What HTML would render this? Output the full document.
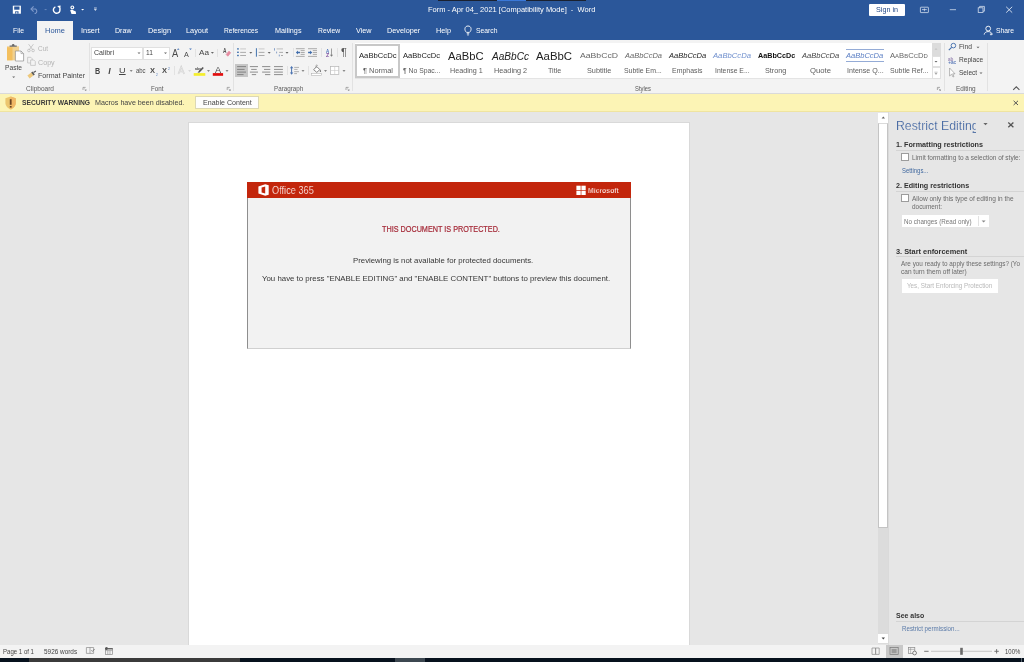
<!DOCTYPE html>
<html>
<head>
<meta charset="utf-8">
<title>Word</title>
<style>
*{box-sizing:border-box;margin:0;padding:0}
html,body{width:1024px;height:662px;overflow:hidden;background:#e6e6e6;font-family:"Liberation Sans",sans-serif}
body{filter:blur(0.4px)}
.a{position:absolute}
.t{position:absolute;white-space:nowrap;line-height:12px;transform-origin:0 50%}
svg{position:absolute;left:0;top:0}
#tx{position:absolute;left:0;top:0;width:1024px;height:662px;will-change:transform}

</style>
</head>
<body>
<!-- title bar + tab row -->
<div class="a" style="left:0;top:0;width:1024px;height:40px;background:#2b579a"></div>
<div class="a" style="left:438px;top:0;width:148px;height:1px;background:#1a2130"></div>
<div class="a" style="left:497px;top:0;width:29px;height:1px;background:#3a78d8"></div>
<div class="a" style="left:869px;top:3.5px;width:36px;height:12px;background:#fff;border-radius:1px"></div>
<div class="a" style="left:37px;top:21px;width:36px;height:19px;background:#f3f3f3"></div>
<!-- ribbon -->
<div class="a" style="left:0;top:40px;width:1024px;height:53.5px;background:#f3f3f3"></div>
<div class="a" style="left:0;top:92.5px;width:1024px;height:1px;background:#dadada"></div>
<!-- group separators -->
<div class="a" style="left:89px;top:43px;width:1px;height:48px;background:#e2e2e2"></div>
<div class="a" style="left:233px;top:43px;width:1px;height:48px;background:#e2e2e2"></div>
<div class="a" style="left:352px;top:43px;width:1px;height:48px;background:#e2e2e2"></div>
<div class="a" style="left:944px;top:43px;width:1px;height:48px;background:#e2e2e2"></div>
<div class="a" style="left:987px;top:43px;width:1px;height:48px;background:#e2e2e2"></div>
<!-- small separators -->
<div class="a" style="left:195px;top:48.5px;width:1px;height:8px;background:#e2e2e2"></div>
<div class="a" style="left:217px;top:48.5px;width:1px;height:8px;background:#e2e2e2"></div>
<div class="a" style="left:173.5px;top:66px;width:1px;height:9px;background:#e2e2e2"></div>
<div class="a" style="left:292.5px;top:48px;width:1px;height:9px;background:#e2e2e2"></div>
<div class="a" style="left:320.5px;top:48px;width:1px;height:9px;background:#e2e2e2"></div>
<div class="a" style="left:337px;top:48px;width:1px;height:9px;background:#e2e2e2"></div>
<div class="a" style="left:286.5px;top:66px;width:1px;height:9px;background:#e2e2e2"></div>
<div class="a" style="left:308px;top:66px;width:1px;height:9px;background:#e2e2e2"></div>
<!-- font boxes -->
<div class="a" style="left:91.2px;top:46.5px;width:51.8px;height:13px;background:#fff;border:1px solid #e0e0e0"></div>
<div class="a" style="left:143px;top:46.5px;width:26.5px;height:13px;background:#fff;border:1px solid #e0e0e0"></div>
<!-- align-left selected -->
<div class="a" style="left:235.3px;top:64.2px;width:12.7px;height:12.8px;background:#c6c6c6"></div>
<!-- styles gallery -->
<div class="a" style="left:355px;top:43px;width:585.5px;height:35.5px;background:#fff;border-bottom:1px solid #e4e4e4"></div>
<div class="a" style="left:355px;top:43.5px;width:44.5px;height:34.5px;background:#fff;border:2px solid #c8c8c8"></div>
<div class="a" style="left:931.5px;top:43px;width:9px;height:12.5px;background:#dcdcdc"></div>
<div class="a" style="left:931.5px;top:55.5px;width:9px;height:11.5px;background:#fff;border:1px solid #e0e0e0"></div>
<div class="a" style="left:931.5px;top:67px;width:9px;height:11.5px;background:#fff;border:1px solid #e0e0e0"></div>
<div class="a" style="left:846px;top:49.2px;width:37.5px;height:0.6px;background:#94abd6"></div>
<div class="a" style="left:846px;top:61.3px;width:37.5px;height:0.6px;background:#94abd6"></div>
<!-- security bar -->
<div class="a" style="left:0;top:93.5px;width:1024px;height:17.8px;background:#fcf4b5"></div>
<div class="a" style="left:0;top:110.6px;width:1024px;height:0.8px;background:#efe4a0"></div>
<div class="a" style="left:195.3px;top:96.1px;width:63.3px;height:12.6px;background:#fdfdfc;border:1px solid #dcd8b4"></div>
<!-- page -->
<div class="a" style="left:187.5px;top:122px;width:502.6px;height:524px;background:#fff;border:1px solid #d9d9d9"></div>
<!-- embedded picture -->
<div class="a" style="left:247px;top:181.7px;width:384px;height:167px;background:#f2f2f2;border:1px solid #8e8e8e;border-top:none;border-bottom:1.6px solid #d0d0d0"></div>
<div class="a" style="left:247px;top:181.7px;width:384px;height:16px;background:#c3260c"></div>
<!-- doc scrollbar -->
<div class="a" style="left:878.3px;top:112.5px;width:10px;height:531px;background:#dcdcdc"></div>
<div class="a" style="left:878.3px;top:112.5px;width:10px;height:10px;background:#fff"></div>
<div class="a" style="left:878.3px;top:122.5px;width:10px;height:405px;background:#fff;border:1px solid #c4c4c4;border-top-color:#dadada"></div>
<div class="a" style="left:878.3px;top:633.7px;width:10px;height:9.5px;background:#fff"></div>
<div class="a" style="left:888.3px;top:111.5px;width:1px;height:533px;background:#dadada"></div>
<!-- pane -->
<div class="a" style="left:896px;top:150px;width:128px;height:1px;background:#d4d4d4"></div>
<div class="a" style="left:896px;top:190.5px;width:128px;height:1px;background:#d4d4d4"></div>
<div class="a" style="left:896px;top:256px;width:128px;height:1px;background:#d4d4d4"></div>
<div class="a" style="left:896px;top:620.5px;width:128px;height:1px;background:#d4d4d4"></div>
<div class="a" style="left:901.2px;top:153.3px;width:8.3px;height:7.8px;background:#fff;border:1px solid #9c9c9c"></div>
<div class="a" style="left:901.2px;top:194.4px;width:8.3px;height:7.8px;background:#fff;border:1px solid #9c9c9c"></div>
<div class="a" style="left:901.7px;top:215px;width:87px;height:12.3px;background:#fff"></div>
<div class="a" style="left:978px;top:216px;width:1px;height:10.3px;background:#e2e2e2"></div>
<div class="a" style="left:901.7px;top:279px;width:96.2px;height:13.5px;background:#fff"></div>
<!-- status bar -->
<div class="a" style="left:0;top:644.5px;width:1024px;height:13.2px;background:#f3f3f3"></div>
<div class="a" style="left:885.5px;top:644.5px;width:17.3px;height:13.2px;background:#c8c8c8"></div>
<!-- taskbar sliver -->
<div class="a" style="left:0;top:657.6px;width:1024px;height:5px;background:#06111d"></div>
<div class="a" style="left:29.4px;top:657.6px;width:210.6px;height:5px;background:#3b3b3b"></div>
<div class="a" style="left:394.5px;top:657.6px;width:30px;height:5px;background:#3c4750"></div>
<div class="a" style="left:1020.5px;top:657.6px;width:1px;height:5px;background:#5a6570"></div>

<svg width="1024" height="662" viewBox="0 0 1024 662">
<defs>
<path id="dd" d="M-1.5,-0.7 L1.5,-0.7 L0,0.9 Z"/>
<g id="launch"><path d="M0,0 H2.6 M0,0 V2.6" stroke="#8a8a8a" stroke-width="0.7" fill="none"/><path d="M1.6,3.4 H3.4 V1.6 Z" fill="#8a8a8a"/><path d="M1.2,1.2 L3,3" stroke="#8a8a8a" stroke-width="0.6"/></g>
</defs>
<!-- ===== QAT ===== -->
<g fill="none" stroke="#fff" stroke-width="1">
<!-- save -->
<path d="M12.8,5.7 H20.9 V13.7 H12.8 Z" fill="#fff" stroke="none"/>
<rect x="14.2" y="6.5" width="5.3" height="3.2" fill="#2b579a" stroke="none"/>
<rect x="15.2" y="11.3" width="3.3" height="2.4" fill="#2b579a" stroke="none"/>
<rect x="16.3" y="11.9" width="1" height="1.8" fill="#fff" stroke="none"/>
<!-- undo faded -->
<path d="M31,9 H35.6 A2.6,2.6 0 0 1 35.6,13.4 H34.6" stroke="#7f9acb" stroke-width="1.1"/>
<path d="M33.6,6.4 L31,9 L33.6,11.6" stroke="#7f9acb" stroke-width="1.1"/>
<path d="M44.6,9.6 H46.6" stroke="#6f8dc2" stroke-width="0.9"/>
<!-- redo -->
<path d="M59.6,8.4 A3.3,3.3 0 1 1 55.4,6.9" stroke-width="1.4"/>
<path d="M57.2,6 L60.6,5.6 L60.4,9.2 Z" fill="#fff" stroke="none"/>
</g>
<!-- touch -->
<circle cx="72.3" cy="7.4" r="1.9" fill="#fff"/>
<path d="M70.2,10.2 L72,9.4 L73.6,10.4 L75.8,11.6 L76,14 L71.5,14 Z" fill="#fff"/>
<circle cx="72.3" cy="7.4" r="0.8" fill="#2b579a"/>
<use href="#dd" x="82.6" y="9.6" fill="#fff"/>
<path d="M94,8 H96.8" stroke="#fff" stroke-width="0.7"/>
<use href="#dd" x="95.4" y="9.9" fill="#fff"/>
<!-- window controls -->
<g fill="none" stroke="#dfe7f3" stroke-width="0.75">
<rect x="920.4" y="7.2" width="8" height="5.4" rx="0.5"/>
<path d="M922,9.6 H926.8 M924.4,8.4 V11.2" stroke-width="0.7"/>
<path d="M949.8,9.7 H956"/>
<rect x="978.2" y="7.8" width="4.8" height="4.8"/>
<path d="M979.6,7.8 V6.4 H984.4 V11.2 H983"/>
<path d="M1006.2,6.8 L1012.2,12.6 M1012.2,6.8 L1006.2,12.6" stroke-width="0.9"/>
</g>
<!-- lightbulb -->
<g fill="none" stroke="#fff" stroke-width="0.9">
<path d="M466.6,32.4 C464,30.4 464.4,26 468,26 C471.6,26 472,30.4 469.4,32.4 Z"/>
<path d="M466.8,33.8 H469.2 M467.3,35 H468.7"/>
</g>
<!-- share person -->
<g fill="none" stroke="#fff" stroke-width="0.9">
<circle cx="988.2" cy="28.6" r="2.4"/>
<path d="M984.2,34.6 C984.4,30.6 992,30.6 992.2,34.6"/>
<path d="M991,33.2 V35.4 M989.9,34.3 H992.1" stroke-width="0.7"/>
</g>

<!-- ===== CLIPBOARD ===== -->
<rect x="7" y="46.3" width="12" height="14" fill="#f1d190"/>
<rect x="7" y="47.3" width="5.5" height="13" fill="#f3bf5e"/>
<path d="M9.6,46.8 V45.4 H11.8 C11.8,43.4 14.6,43.4 14.6,45.4 H16.8 V46.8 Z" fill="#6a6a6a"/>
<path d="M15.4,51 H21 L23.6,53.6 V61 H15.4 Z" fill="#fff" stroke="#8e8e8e" stroke-width="0.7"/>
<path d="M21,51 V53.6 H23.6" fill="none" stroke="#8e8e8e" stroke-width="0.6"/>
<use href="#dd" x="13.7" y="77.1" fill="#666"/>
<!-- scissors (disabled) -->
<g fill="none" stroke="#bcbcbc" stroke-width="0.8">
<path d="M28.6,44.2 L32.8,49.8 M33.4,44.2 L29.2,49.8"/>
<circle cx="28.9" cy="50.5" r="1.3"/><circle cx="33.1" cy="50.5" r="1.3"/>
</g>
<!-- copy (disabled) -->
<g fill="#f3f3f3" stroke="#bcbcbc" stroke-width="0.7">
<path d="M27.6,57.3 H30.8 L32.2,58.7 V63 H27.6 Z"/>
<path d="M30.6,60 H33.8 L35.3,61.5 V65.4 H30.6 Z"/>
</g>
<!-- format painter -->
<path d="M27.4,75.4 L31.4,72.6 L33.4,75.6 L29.6,78.6 Z" fill="#edc87c"/>
<path d="M31.2,72.4 L32.6,71.4 L34.8,74.4 L33.4,75.6 Z" fill="#5a5a5a"/>
<path d="M33.2,72 L35.6,70.6 L36.2,71.6 L33.9,73 Z" fill="#5a5a5a"/>
<use href="#launch" x="83" y="87.4"/>
<use href="#launch" x="227.2" y="87.4"/>
<use href="#launch" x="346" y="87.4"/>
<use href="#launch" x="937.4" y="87.4"/>

<!-- ===== FONT ===== -->
<use href="#dd" x="139" y="53.2" fill="#666"/>
<use href="#dd" x="165.5" y="53.2" fill="#666"/>
<use href="#dd" x="212.4" y="52.8" fill="#666"/>
<use href="#dd" x="131.2" y="70.9" fill="#666"/>
<use href="#dd" x="189.6" y="70.9" fill="#cfcfcf"/>
<use href="#dd" x="208.5" y="70.9" fill="#666"/>
<use href="#dd" x="227" y="70.9" fill="#666"/>
<!-- grow / shrink arrows -->
<path d="M176.9,49.8 L178.2,48.3 L179.5,49.8 Z" fill="#4a76b8"/>
<path d="M189.1,48.4 L191.9,48.4 L190.5,49.9 Z" fill="#4a76b8"/>
<!-- clear formatting -->
<path d="M226.2,54.4 L229,51.2 L230.6,52.8 L227.8,56.2 Z" fill="#e58aa0" stroke="#e58aa0" stroke-width="0.8" stroke-linejoin="round"/>
<!-- text effects faded A -->
<path d="M178.4,74 L181.2,66.8 L184.2,74 M179.6,71.4 H183" fill="none" stroke="#cdcdcd" stroke-width="1.5"/>
<path d="M178.4,74 L181.2,66.8 L184.2,74 M179.6,71.4 H183" fill="none" stroke="#f3f3f3" stroke-width="0.5"/>
<!-- highlighter -->
<rect x="193.7" y="73.1" width="11.6" height="2.7" fill="#f4ee2c"/>
<path d="M197.6,72.8 L198.4,71.4 L202.6,67 L203.8,68 L199.6,72.4 Z" fill="#555"/>
<!-- font color bar -->
<rect x="212.8" y="73.1" width="10.3" height="2.7" fill="#e10e0e"/>

<!-- ===== PARAGRAPH row 1 ===== -->
<g fill="#4273ae">
<rect x="237.1" y="48.2" width="1.7" height="1.4"/><rect x="237.1" y="51.6" width="1.7" height="1.4"/><rect x="237.1" y="54.8" width="1.7" height="1.4"/>
<rect x="255.9" y="48.2" width="1" height="8.5"/>
</g>
<g stroke="#8c8c8c" stroke-width="0.7" fill="none">
<path d="M240.2,48.9 H246" stroke="#b8b8b8"/><path d="M240.2,52.4 H246 M240.2,55.5 H246"/>
<path d="M258.7,48.9 H264.5" stroke="#b8b8b8"/><path d="M258.7,52.4 H264.5 M258.7,55.5 H264.5"/>
<path d="M276.6,48.9 H283" stroke="#a8a8a8"/><path d="M279.2,52.4 H283 M281,55.5 H283"/>
</g>
<g stroke="#5a7eb6" stroke-width="0.7" fill="none"><path d="M274.5,48.2 V50.6 M276.6,51.6 V53.4 M279.3,54.6 V56.4"/></g>
<use href="#dd" x="250.8" y="52.8" fill="#666"/>
<use href="#dd" x="269.2" y="52.8" fill="#666"/>
<use href="#dd" x="287" y="52.8" fill="#666"/>
<!-- indent icons -->
<g stroke="#8c8c8c" stroke-width="0.7" fill="none">
<path d="M295.9,48.7 H304.7 M295.9,56.4 H304.7 M300.6,50.6 H304.7 M300.6,52.5 H304.7 M300.6,54.4 H304.7"/>
<path d="M308,48.7 H317 M308,56.4 H317 M312.8,50.6 H317 M312.8,52.5 H317 M312.8,54.4 H317"/>
</g>
<path d="M295.9,52.5 L298,50.4 V51.8 H300 V53.2 H298 V54.6 Z" fill="#3f6cab"/>
<path d="M312.2,52.5 L310.1,50.4 V51.8 H308.1 V53.2 H310.1 V54.6 Z" fill="#3f6cab"/>
<!-- sort arrow -->
<path d="M331.5,48.5 V56" stroke="#7a7a7a" stroke-width="0.7"/><path d="M330,54.8 L331.5,56.8 L333,54.8 Z" fill="#7a7a7a"/>
<!-- ===== PARAGRAPH row 2 ===== -->
<g stroke="#6c6c6c" stroke-width="0.75" fill="none">
<path d="M237.1,66.6 H246 M237.1,69.4 H244.6 M237.1,72.1 H246 M237.1,74.6 H243.6"/>
<path d="M249.9,66.6 H258 M251.2,69.4 H256.7 M249.9,72.1 H258 M251.8,74.6 H256.1"/>
<path d="M262.1,66.6 H270.3 M264,69.4 H270.3 M262.1,72.1 H270.3 M265,74.6 H270.3"/>
<path d="M274,66.6 H282.9 M274,69.4 H282.9 M274,72.1 H282.9 M274,74.6 H282.9"/>
<path d="M294.2,67.4 H299 M294.2,69.4 H297.6 M294.2,71.7 H299 M294.2,73.6 H297" stroke="#9a9a9a"/>
</g>
<path d="M291.6,65.9 L293.3,68.2 H292.1 V72.5 H293.3 L291.6,74.8 L289.9,72.5 H291.1 V68.2 H289.9 Z" fill="#4a72b0"/>
<use href="#dd" x="303" y="70.9" fill="#666"/>
<!-- bucket -->
<rect x="311.6" y="73.4" width="9.9" height="2.1" fill="#fff" stroke="#a8a8a8" stroke-width="0.5"/>
<path d="M313.6,69.6 L316.8,66.6 L319.8,69.6 L316.8,72.4 Z" fill="#fff" stroke="#6a6a6a" stroke-width="0.8"/>
<path d="M316,68 V65.6 C316,64.8 317.6,64.8 317.6,65.8" fill="none" stroke="#7a7a7a" stroke-width="0.6"/>
<path d="M320.2,69.4 C321.2,70.6 321.4,71.8 320.4,72 C319.6,71.8 319.6,70.6 320.2,69.4 Z" fill="#6a6a6a"/>
<use href="#dd" x="325.5" y="70.9" fill="#666"/>
<!-- borders -->
<rect x="330.6" y="66.4" width="8.2" height="8.2" fill="#fff" stroke="#b4b4b4" stroke-width="0.7"/>
<path d="M334.7,66.4 V74.6 M330.6,70.5 H338.8" stroke="#c8c8c8" stroke-width="0.6"/>
<use href="#dd" x="344" y="70.9" fill="#666"/>
<!-- gallery scroll arrows -->
<use href="#dd" x="936" y="49.4" fill="#c6c6c6" transform="rotate(180 936 49.2)"/>
<use href="#dd" x="936" y="61.6" fill="#666"/>
<path d="M934.4,72.2 H937.6" stroke="#8a8a8a" stroke-width="0.5"/>
<path d="M934.6,73.2 L937.4,73.2 L936,74.8 Z" fill="#8a8a8a"/>

<!-- ===== EDITING ===== -->
<circle cx="953.4" cy="45.6" r="2.3" fill="none" stroke="#3f6cab" stroke-width="0.9"/>
<path d="M951.6,47.4 L948.8,50.2" stroke="#3f6cab" stroke-width="1.1"/>
<use href="#dd" x="978" y="47.4" fill="#666"/>
<path d="M948.4,62.6 H950.8 M949.6,61.4 V63.8" stroke="#5a7ab8" stroke-width="0.6"/>
<use href="#dd" x="981" y="73.2" fill="#666"/>
<path d="M949.6,68 V76 L951.6,74.2 L953,77 L954,76.5 L952.7,73.8 H955 Z" fill="#fff" stroke="#8a8a8a" stroke-width="0.6"/>
<path d="M1013.2,89.8 L1016.3,86.8 L1019.4,89.8" fill="none" stroke="#555" stroke-width="1.1"/>

<!-- ===== SECURITY BAR ===== -->
<path d="M5.4,98.2 L10.6,96.4 L15.8,98.2 V103 C15.8,106.4 12.6,108.6 10.6,109.6 C8.6,108.6 5.4,106.4 5.4,103 Z" fill="#ecc66e"/>
<path d="M10.6,96.4 L15.8,98.2 V103 C15.8,106.4 12.6,108.6 10.6,109.6 Z" fill="#f0b866"/>
<rect x="9.8" y="99.2" width="1.8" height="5.6" fill="#6a4424"/><rect x="9.8" y="106" width="1.8" height="1.6" fill="#6a4424"/>
<path d="M1013.6,100.8 L1018,105 M1018,100.8 L1013.6,105" stroke="#555" stroke-width="1"/>
<!-- ===== DOC LOGOS ===== -->
<path d="M258.4,186.6 L265.2,184.3 L268.7,185.2 V194.8 L265.2,195.7 L258.4,193.6 Z M261.6,187.4 V192.6 L265.2,193.4 V186.4 Z" fill="#fff" fill-rule="evenodd"/>
<g fill="#fff"><rect x="576.4" y="185.7" width="4.3" height="4.3"/><rect x="581.4" y="185.7" width="4.3" height="4.3"/><rect x="576.4" y="190.7" width="4.3" height="4.3"/><rect x="581.4" y="190.7" width="4.3" height="4.3"/></g>
<!-- ===== PANE / SCROLL ICONS ===== -->
<path d="M881.6,118.4 L883.3,116.5 L885,118.4 Z" fill="#666"/>
<path d="M881.6,637.6 L883.3,639.5 L885,637.6 Z" fill="#444"/>
<path d="M983.4,123 L987.6,123 L985.5,125.3 Z" fill="#666"/>
<path d="M1008.3,122.6 L1013.4,127.3 M1013.4,122.6 L1008.3,127.3" stroke="#555" stroke-width="1.3"/><rect x="972.6" y="132.1" width="3.4" height="0.9" fill="#4a6aa0"/>
<path d="M981.6,220.4 L985.6,220.4 L983.6,222.6 Z" fill="#8a8a8a"/>
<!-- ===== STATUS BAR ICONS ===== -->
<g fill="none" stroke="#8a8a8a" stroke-width="0.7">
<path d="M86.4,647.5 H93.6 V653.4 H86.4 Z M90,647.5 V653.4"/>
<path d="M91.4,650.4 L92.4,651.4 L94.6,649" stroke="#666" stroke-width="0.8"/>
<rect x="105.4" y="648.6" width="7" height="5.8"/>
<path d="M105.4,650.6 H112.4 M107.8,650.6 V654.4 M110,650.6 V654.4" stroke-width="0.6"/>
</g>
<rect x="108" y="648.2" width="4.6" height="1.2" fill="#555"/>
<circle cx="106.5" cy="648.6" r="1.5" fill="#555"/>
<!-- view icons -->
<g fill="none" stroke="#8a8a8a" stroke-width="0.7">
<path d="M872,648 H875.6 V654.4 H872 Z M875.6,648 H879.2 V654.4 H875.6 Z"/>
<rect x="890" y="647.6" width="8.2" height="7" stroke="#777"/>
<rect x="891.6" y="649" width="5" height="4.2" fill="#9a9a9a" stroke="none"/>
<rect x="908.4" y="647.6" width="6.4" height="6"/>
<path d="M910.6,647.6 V653.6 M908.4,649.4 H914.8" stroke-width="0.5"/>
<circle cx="914.6" cy="653" r="1.9" fill="#f3f3f3" stroke="#555"/>
</g>
<!-- zoom slider -->
<path d="M924.2,651.3 H928.6" stroke="#666" stroke-width="0.9"/>
<path d="M931,651.3 H992" stroke="#b0b0b0" stroke-width="0.7"/>
<rect x="960.2" y="647.8" width="2.6" height="7" fill="#6a6a6a"/>
<path d="M994.4,651.3 H998.8 M996.6,649.1 V653.5" stroke="#666" stroke-width="0.9"/>
</svg>

<div id="tx">
<div class="t" style="left:427.70px;top:4.20px;font-size:7.2px;color:#fff;transform:scaleX(1.0427);">Form - Apr 04_ 2021 [Compatibility Mode]&nbsp; -&nbsp; Word</div>
<div class="t" style="left:876.00px;top:4.19px;font-size:7.3px;color:#1f4686;transform:scaleX(0.9860);">Sign in</div>
<div class="t" style="left:12.50px;top:24.59px;font-size:7.3px;color:#fff;transform:scaleX(0.9349);">File</div>
<div class="t" style="left:80.50px;top:24.59px;font-size:7.3px;color:#fff;transform:scaleX(1.0137);">Insert</div>
<div class="t" style="left:115.00px;top:24.59px;font-size:7.3px;color:#fff;transform:scaleX(0.9688);">Draw</div>
<div class="t" style="left:147.50px;top:24.59px;font-size:7.3px;color:#fff;transform:scaleX(1.0124);">Design</div>
<div class="t" style="left:186.00px;top:24.59px;font-size:7.3px;color:#fff;transform:scaleX(1.0036);">Layout</div>
<div class="t" style="left:224.00px;top:24.59px;font-size:7.3px;color:#fff;transform:scaleX(0.9108);">References</div>
<div class="t" style="left:274.50px;top:24.59px;font-size:7.3px;color:#fff;transform:scaleX(0.9901);">Mailings</div>
<div class="t" style="left:317.50px;top:24.59px;font-size:7.3px;color:#fff;transform:scaleX(0.9295);">Review</div>
<div class="t" style="left:355.50px;top:24.59px;font-size:7.3px;color:#fff;transform:scaleX(0.9880);">View</div>
<div class="t" style="left:386.75px;top:24.59px;font-size:7.3px;color:#fff;transform:scaleX(0.9995);">Developer</div>
<div class="t" style="left:436.00px;top:24.59px;font-size:7.3px;color:#fff;transform:scaleX(0.9990);">Help</div>
<div class="t" style="left:475.50px;top:24.59px;font-size:7.3px;color:#fff;transform:scaleX(0.9297);">Search</div>
<div class="t" style="left:996.00px;top:24.59px;font-size:7.3px;color:#fff;transform:scaleX(0.9238);">Share</div>
<div class="t" style="left:45.00px;top:24.59px;font-size:7.3px;color:#2b579a;transform:scaleX(1.0273);">Home</div>
<div class="t" style="left:5.00px;top:62.00px;font-size:7.2px;color:#444;transform:scaleX(0.9244);">Paste</div>
<div class="t" style="left:38.00px;top:42.80px;font-size:7.2px;color:#b4b4b4;transform:scaleX(0.8939);">Cut</div>
<div class="t" style="left:37.90px;top:56.50px;font-size:7.2px;color:#b4b4b4;transform:scaleX(0.9952);">Copy</div>
<div class="t" style="left:37.90px;top:69.70px;font-size:7.2px;color:#444;transform:scaleX(0.9906);">Format Painter</div>
<div class="t" style="left:26.00px;top:82.81px;font-size:7.0px;color:#5a5a5a;transform:scaleX(0.9343);">Clipboard</div>
<div class="t" style="left:150.50px;top:82.81px;font-size:7.0px;color:#5a5a5a;transform:scaleX(0.8919);">Font</div>
<div class="t" style="left:273.75px;top:82.81px;font-size:7.0px;color:#5a5a5a;transform:scaleX(0.8944);">Paragraph</div>
<div class="t" style="left:635.00px;top:82.81px;font-size:7.0px;color:#5a5a5a;transform:scaleX(0.8393);">Styles</div>
<div class="t" style="left:956.00px;top:82.81px;font-size:7.0px;color:#5a5a5a;transform:scaleX(0.9203);">Editing</div>
<div class="t" style="left:93.60px;top:47.30px;font-size:7.2px;color:#444;transform:scaleX(0.9816);">Calibri</div>
<div class="t" style="left:145.75px;top:47.30px;font-size:7.2px;color:#444;transform:scaleX(0.9172);">11</div>
<div class="t" style="left:94.90px;top:65.21px;font-size:8.4px;color:#444;font-weight:bold;transform:scaleX(0.8577);">B</div>
<div class="t" style="left:108.20px;top:65.20px;font-size:8.6px;color:#444;font-weight:bold;font-style:italic;transform:scaleX(1.0000);">I</div>
<div class="t" style="left:118.60px;top:65.04px;font-size:8.0px;color:#444;transform:scaleX(1.1503);text-decoration:underline;">U</div>
<div class="t" style="left:135.90px;top:65.32px;font-size:6.9px;color:#4a4a4a;transform:scaleX(0.8629);">abc</div>
<div class="t" style="left:199.25px;top:46.87px;font-size:7.6px;color:#444;transform:scaleX(1.0756);">Aa</div>
<div class="t" style="left:958.80px;top:41.10px;font-size:7.2px;color:#444;transform:scaleX(0.9296);">Find</div>
<div class="t" style="left:958.80px;top:54.20px;font-size:7.2px;color:#444;transform:scaleX(0.9175);">Replace</div>
<div class="t" style="left:958.80px;top:67.30px;font-size:7.2px;color:#444;transform:scaleX(0.9107);">Select</div>
<div class="t" style="left:21.90px;top:97.20px;font-size:7.1px;color:#3a3a3a;font-weight:bold;transform:scaleX(0.9458);">SECURITY WARNING</div>
<div class="t" style="left:94.90px;top:97.20px;font-size:7.1px;color:#444;transform:scaleX(1.0069);">Macros have been disabled.</div>
<div class="t" style="left:202.50px;top:97.20px;font-size:7.1px;color:#444;transform:scaleX(0.9968);">Enable Content</div>
<div class="t" style="left:358.75px;top:50.44px;font-size:8.0px;color:#222;transform:scaleX(0.9585);">AaBbCcDc</div>
<div class="t" style="left:362.50px;top:65.00px;font-size:7.2px;color:#5c5c5c;transform:scaleX(1.0334);">&para; Normal</div>
<div class="t" style="left:403.00px;top:50.44px;font-size:8.0px;color:#222;transform:scaleX(0.9457);">AaBbCcDc</div>
<div class="t" style="left:403.00px;top:65.00px;font-size:7.2px;color:#5c5c5c;transform:scaleX(0.9487);">&para; No Spac...</div>
<div class="t" style="left:447.90px;top:49.57px;font-size:11.8px;color:#222;transform:scaleX(0.9521);">AaBbC</div>
<div class="t" style="left:449.50px;top:65.00px;font-size:7.2px;color:#5c5c5c;transform:scaleX(0.9990);">Heading 1</div>
<div class="t" style="left:491.75px;top:49.86px;font-size:10.6px;color:#222;font-style:italic;transform:scaleX(0.9518);">AaBbCc</div>
<div class="t" style="left:493.75px;top:65.00px;font-size:7.2px;color:#5c5c5c;transform:scaleX(1.0112);">Heading 2</div>
<div class="t" style="left:535.90px;top:49.57px;font-size:11.8px;color:#222;transform:scaleX(0.9655);">AaBbC</div>
<div class="t" style="left:548.00px;top:65.00px;font-size:7.2px;color:#5c5c5c;transform:scaleX(0.9953);">Title</div>
<div class="t" style="left:580.00px;top:50.44px;font-size:8.0px;color:#666;transform:scaleX(1.0819);">AaBbCcD</div>
<div class="t" style="left:586.75px;top:65.00px;font-size:7.2px;color:#5c5c5c;transform:scaleX(1.0111);">Subtitle</div>
<div class="t" style="left:625.00px;top:50.44px;font-size:8.0px;color:#666;font-style:italic;transform:scaleX(0.9349);">AaBbCcDa</div>
<div class="t" style="left:624.25px;top:65.00px;font-size:7.2px;color:#5c5c5c;transform:scaleX(0.9641);">Subtle Em...</div>
<div class="t" style="left:669.00px;top:50.44px;font-size:8.0px;color:#222;font-style:italic;transform:scaleX(0.9412);">AaBbCcDa</div>
<div class="t" style="left:672.00px;top:65.00px;font-size:7.2px;color:#5c5c5c;transform:scaleX(0.9663);">Emphasis</div>
<div class="t" style="left:713.00px;top:50.44px;font-size:8.0px;color:#6f8fcd;font-style:italic;transform:scaleX(0.9601);">AaBbCcDa</div>
<div class="t" style="left:714.75px;top:65.00px;font-size:7.2px;color:#5c5c5c;transform:scaleX(0.9530);">Intense E...</div>
<div class="t" style="left:757.75px;top:50.44px;font-size:8.0px;color:#111;font-weight:bold;transform:scaleX(0.9010);">AaBbCcDc</div>
<div class="t" style="left:765.00px;top:65.00px;font-size:7.2px;color:#5c5c5c;transform:scaleX(1.0100);">Strong</div>
<div class="t" style="left:802.00px;top:50.44px;font-size:8.0px;color:#444;font-style:italic;transform:scaleX(0.9412);">AaBbCcDa</div>
<div class="t" style="left:810.00px;top:65.00px;font-size:7.2px;color:#5c5c5c;transform:scaleX(1.0718);">Quote</div>
<div class="t" style="left:846.25px;top:50.44px;font-size:8.0px;color:#5b7fc4;font-style:italic;transform:scaleX(0.9412);">AaBbCcDa</div>
<div class="t" style="left:846.60px;top:65.00px;font-size:7.2px;color:#5c5c5c;transform:scaleX(0.9864);">Intense Q...</div>
<div class="t" style="left:890.40px;top:50.44px;font-size:8.0px;color:#666;transform:scaleX(0.9590);">A<span style="font-size:6.2px">A</span>B<span style="font-size:6.2px">B</span>C<span style="font-size:6.2px">C</span>D<span style="font-size:6.2px">D</span></div>
<div class="t" style="left:889.75px;top:65.00px;font-size:7.2px;color:#5c5c5c;transform:scaleX(0.9731);">Subtle Ref...</div>
<div class="t" style="left:272.20px;top:184.77px;font-size:10.4px;color:#fff;transform:scaleX(0.8858);-webkit-text-stroke:0.2px #c3260c;">Office 365</div>
<div class="t" style="left:587.70px;top:184.64px;font-size:8px;color:#fff;font-weight:bold;transform:scaleX(0.8583);-webkit-text-stroke:0.25px #c3260c;">Microsoft</div>
<div class="t" style="left:381.60px;top:222.92px;font-size:8.3px;color:#a52a38;transform:scaleX(0.8738);-webkit-text-stroke:0.2px #a52a38;">THIS DOCUMENT IS PROTECTED.</div>
<div class="t" style="left:352.70px;top:254.85px;font-size:7.9px;color:#363636;transform:scaleX(0.9881);">Previewing is not available for protected documents.</div>
<div class="t" style="left:262.00px;top:272.85px;font-size:7.9px;color:#363636;transform:scaleX(0.9938);">You have to press "ENABLE EDITING" and "ENABLE CONTENT" buttons to preview this document.</div>
<div class="t" style="left:896.00px;top:119.89px;font-size:13px;color:#32599a;transform:scaleX(0.9448);clip-path:inset(0 3.2% 0 0);-webkit-text-stroke:0.22px #e6e6e6;">Restrict Editing</div>
<div class="t" style="left:896.00px;top:138.98px;font-size:7.4px;color:#333;font-weight:bold;transform:scaleX(0.9762);">1. Formatting restrictions</div>
<div class="t" style="left:912.40px;top:151.72px;font-size:6.9px;color:#6a6a6a;transform:scaleX(0.9412);">Limit formatting to a selection of style:</div>
<div class="t" style="left:901.70px;top:164.92px;font-size:6.9px;color:#41699f;transform:scaleX(0.8579);">Settings...</div>
<div class="t" style="left:896.00px;top:180.48px;font-size:7.4px;color:#333;font-weight:bold;transform:scaleX(0.9685);">2. Editing restrictions</div>
<div class="t" style="left:912.40px;top:192.82px;font-size:6.9px;color:#6a6a6a;transform:scaleX(0.9473);">Allow only this type of editing in the</div>
<div class="t" style="left:912.00px;top:201.42px;font-size:6.9px;color:#6a6a6a;transform:scaleX(0.9320);">document:</div>
<div class="t" style="left:903.60px;top:215.82px;font-size:6.9px;color:#777;transform:scaleX(0.9097);">No changes (Read only)</div>
<div class="t" style="left:896.00px;top:245.68px;font-size:7.4px;color:#333;font-weight:bold;transform:scaleX(0.9976);">3. Start enforcement</div>
<div class="t" style="left:901.40px;top:258.12px;font-size:6.9px;color:#6a6a6a;transform:scaleX(0.9209);">Are you ready to apply these settings? (Yo</div>
<div class="t" style="left:901.00px;top:266.42px;font-size:6.9px;color:#6a6a6a;transform:scaleX(0.9494);">can turn them off later)</div>
<div class="t" style="left:906.90px;top:280.42px;font-size:6.9px;color:#b8b8b8;transform:scaleX(0.9114);">Yes, Start Enforcing Protection</div>
<div class="t" style="left:895.50px;top:609.98px;font-size:7.4px;color:#333;font-weight:bold;transform:scaleX(0.9417);">See also</div>
<div class="t" style="left:902.00px;top:623.32px;font-size:6.9px;color:#5a7aa8;transform:scaleX(0.8954);">Restrict permission...</div>
<div class="t" style="left:2.75px;top:645.61px;font-size:7.0px;color:#444;transform:scaleX(0.8656);">Page 1 of 1</div>
<div class="t" style="left:43.75px;top:645.61px;font-size:7.0px;color:#444;transform:scaleX(0.9157);">5926 words</div>
<div class="t" style="left:1005.00px;top:645.61px;font-size:7.0px;color:#444;transform:scaleX(0.8517);">100%</div>
<div class="t" style="left:171.80px;top:48.00px;font-size:10px;color:#4a4a4a;transform:scaleX(0.9293);">A</div>
<div class="t" style="left:184.10px;top:48.64px;font-size:8px;color:#4a4a4a;transform:scaleX(0.8982);">A</div>
<div class="t" style="left:149.90px;top:65.30px;font-size:7.2px;color:#4a4a4a;font-weight:bold;transform:scaleX(1.0423);">X</div>
<div class="t" style="left:155.60px;top:68.53px;font-size:3.8px;color:#4a76b8;transform:scaleX(0.8471);">2</div>
<div class="t" style="left:162.00px;top:65.30px;font-size:7.2px;color:#4a4a4a;font-weight:bold;transform:scaleX(1.0423);">X</div>
<div class="t" style="left:168.00px;top:62.73px;font-size:3.8px;color:#4a76b8;transform:scaleX(0.8941);">2</div>
<div class="t" style="left:214.90px;top:64.30px;font-size:8.6px;color:#4a4a4a;transform:scaleX(1.0638);">A</div>
<div class="t" style="left:195.00px;top:62.81px;font-size:4.2px;color:#444;font-weight:bold;transform:scaleX(0.8173);">aby</div>
<div class="t" style="left:222.70px;top:45.22px;font-size:6.9px;color:#555;font-weight:bold;transform:scaleX(0.7022);">A</div>
<div class="t" style="left:325.60px;top:44.71px;font-size:5.6px;color:#4a72b8;font-weight:bold;transform:scaleX(0.7907);">A</div>
<div class="t" style="left:325.60px;top:49.31px;font-size:5.6px;color:#7c4a9c;font-weight:bold;transform:scaleX(0.9352);">Z</div>
<div class="t" style="left:341.00px;top:46.90px;font-size:10px;color:#555;transform:scaleX(1.0791);">&para;</div>
<div class="t" style="left:948.20px;top:53.15px;font-size:5px;color:#9888b4;font-weight:bold;transform:scaleX(0.9241);">ab</div>
<div class="t" style="left:951.40px;top:56.76px;font-size:4.8px;color:#5a7ab8;font-weight:bold;transform:scaleX(0.9731);">ac</div>
</div>
</body>
</html>
